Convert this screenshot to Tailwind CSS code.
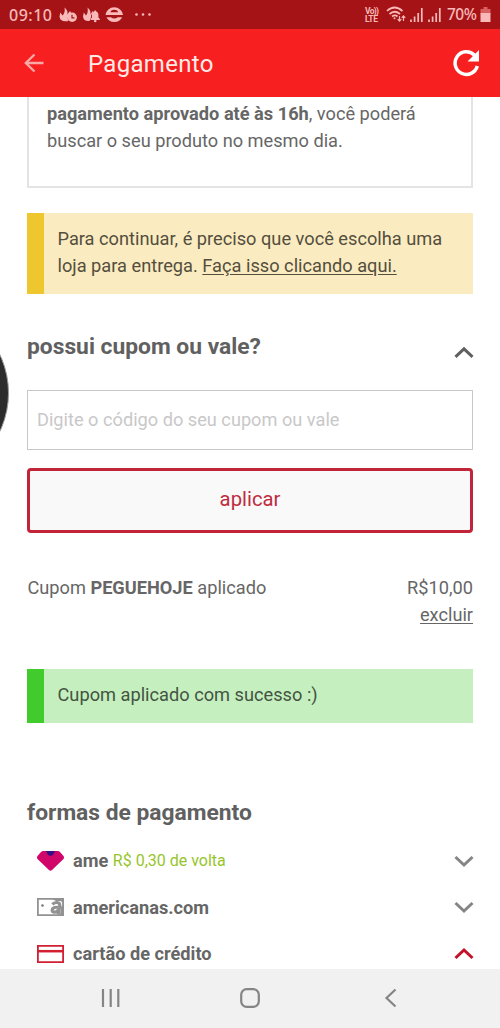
<!DOCTYPE html>
<html lang="pt-BR">
<head>
<meta charset="utf-8">
<meta name="viewport" content="width=device-width, initial-scale=1">
<title>Pagamento</title>
<script src="https://cdn.jsdelivr.net/npm/@tailwindcss/browser@4"></script>
</head>
<body class="w-[500px] h-[1028px] overflow-hidden bg-white font-['Roboto',sans-serif] text-[#666]">
<div class="relative flex h-[1028px] w-[500px] flex-col overflow-hidden">
  <!-- Status bar -->
  <div class="flex h-[29px] shrink-0 items-center bg-[#a51316] text-[#f8b9b8]">
    <span class="ml-[9px] w-[50px] whitespace-nowrap font-['Noto_Sans',sans-serif] text-[16px] font-medium leading-none tracking-[0.5px]">09:10</span>
    <svg class="h-[29px] w-[93px]" viewBox="59 0 93 29" fill="currentColor">
      <path d="M64.500 7.500q4 3.500 2.800 7l2.700-3.500q1.200 1 1 2.500a5.200 5.200 0 0 0-2.500 7.500q-8.500 1.500-9-4.500l.8-4 2.200 3q3-3 2-8z"/>
      <circle cx="72.200" cy="17.300" r="4.700"/><path d="M72 14.800v3h2.500" fill="none" stroke="#a51316" stroke-width="1.200"/>
      <path d="M87.500 7.500q4 3.500 2.800 7l2.500-3.500q1 .8.700 1.500-2.500 1.500-2.500 5l-1.500 3.500q-6 .5-6.500-4.500l.8-4 2.200 3q2.500-3 1.500-8z"/>
      <path d="M90.500 20v-1l1.500-1.500v-3a3.500 3.500 0 0 1 2.400-3.200v-.8h1.600v.8a3.500 3.500 0 0 1 2.400 3.200v3l1.500 1.500v1z"/><circle cx="95.200" cy="21" r="1.300"/>
      <path fill-rule="evenodd" d="M105.500 15a8.800 8.800 0 0 1 17.500 0zM110.500 12.300h7.500a3.700 2.500 0 0 0-7.500 0z"/>
      <path d="M106.500 17.200h4.300q3.500 2.600 7 0h4.300a8.400 7.500 0 0 1-15.600 0z"/>
      <circle cx="136.500" cy="14.500" r="1.300"/><circle cx="143" cy="14.500" r="1.300"/><circle cx="149.500" cy="14.500" r="1.300"/>
    </svg>
    <div class="ml-[213px] flex w-[16px] flex-col text-[8.500px] font-bold leading-[8px]"><span class="whitespace-nowrap tracking-[-0.7px]">Vo))</span><span class="tracking-[-0.3px]">LTE</span></div>
    <svg class="ml-[5px] h-[29px] w-[56px]" viewBox="386 0 56 29" fill="none" stroke="currentColor">
      <path stroke-width="1.700" d="M387 11q7.500-7 15.500 0M389.500 14q5-4.500 10.500 0M392 16.500q3-2.300 5.500 0"/>
      <path stroke-width="1.200" d="M399.500 16v5m-1.800-1.800 1.800 2 1.800-2M403.500 21v-5m-1.800 1.800 1.800-2 1.800 2"/>
      <circle cx="394.500" cy="18.300" r="1" fill="currentColor" stroke="none"/>
      <path stroke-width="1.700" d="M411 22v-2.500M414.600 22v-5.500M418.200 22v-9M421.800 22V8M429 22v-2.500M432.600 22v-5.500M436.200 22v-9M439.800 22V8"/>
    </svg>
    <span class="ml-[5px] w-[33px] whitespace-nowrap font-['Noto_Sans',sans-serif] text-[15.500px] font-medium leading-none tracking-[-0.5px]">70%</span>
    <svg class="h-[29px] w-[12px]" viewBox="480 0 12 29"><path fill="#d9605f" d="M483.500 7h4v2h3v5h-10V9h3z"/><path fill="currentColor" d="M480.500 13h10v9h-10z"/></svg>
  </div>

  <!-- App bar -->
  <header class="flex h-[68px] shrink-0 items-center bg-[#f71f20]">
    <svg class="ml-[23px] h-[24px] w-[22px]" viewBox="0 0 22 24" fill="none" stroke="#fba9a6" stroke-width="2.300"><path d="M20.500 12H2.500M11.500 3.500 2.800 12l8.700 8.500"/></svg>
    <h1 class="ml-[43px] pt-[2px] text-[24px] leading-none text-[#ffeae6] tracking-[0.300px]">Pagamento</h1>
    <svg class="ml-auto mr-[20px] h-[28px] w-[28px]" viewBox="0 0 28 28"><path d="M22.500 6.200A11.300 11.300 0 1 0 25.300 17" fill="none" stroke="#fff" stroke-width="3.500"/><path d="M27 1v11.500H15.500z" fill="#fff"/></svg>
  </header>

  <main class="flex h-[872px] shrink-0 flex-col overflow-hidden px-[27px] text-[18.200px] leading-[27px]">
    <p class="h-[91px] shrink-0 whitespace-nowrap border-2 border-t-0 border-[#e4e4e4] pl-[18px] pt-[3px]"><b>pagamento aprovado até às 16h</b>, você poderá<br>buscar o seu produto no mesmo dia.</p>

    <p class="mt-[25px] h-[81px] shrink-0 whitespace-nowrap border-l-[17px] border-[#eec72f] bg-[#faecc0] pl-[13.500px] pt-[12px] text-[18.230px] text-[#544e3e]">Para continuar, é preciso que você escolha uma<br>loja para entrega. <a class="underline underline-offset-2">Faça isso clicando aqui.</a></p>

    <div class="mt-[36px] flex h-[34px] shrink-0 justify-between">
      <h2 class="text-[22.800px] font-bold leading-[34px] text-[#606060]">possui cupom ou vale?</h2>
      <svg class="mt-[15px] -mr-px h-[14px] w-[20px]" viewBox="0 0 20 14" fill="none" stroke="#606060" stroke-width="3"><path d="m1.500 11.800 8.500-8 8.500 8"/></svg>
    </div>
    <div class="mt-[26px] flex h-[60px] shrink-0 items-center border-[1.500px] border-[#c8c8c8] pb-[2px] pl-[9px] text-[#c8c8c8]">Digite o código do seu cupom ou vale</div>
    <button class="mt-[18px] h-[65px] shrink-0 rounded-[4px] border-[3px] border-[#c2253a] bg-[#f9f9f9] pb-[2px] text-[20.300px] text-[#be2c40]">aplicar</button>

    <div class="mt-[41px] flex h-[55px] shrink-0 justify-between">
      <p class="pl-[0.500px]">Cupom <b>PEGUEHOJE</b> aplicado</p>
      <p class="text-right">R$10,00<br><a class="underline underline-offset-2">excluir</a></p>
    </div>
    <p class="mt-[40px] h-[54px] shrink-0 border-l-[17px] border-[#41cb2c] bg-[#c6efc0] pl-[13.500px] pt-[12px] text-[18.230px] text-[#435440]">Cupom aplicado com sucesso :)</p>

    <h2 class="mt-[73px] shrink-0 text-[22.800px] font-bold leading-[34px] text-[#606060]">formas de pagamento</h2>
    <ul class="mt-[7px] flex shrink-0 flex-col pl-[10px]">
      <li class="flex h-[47px] items-center">
        <svg class="h-[20px] w-[27px]" viewBox="0 0 27 20"><path fill="#d0066b" d="M6 0h15q1 0 2 1l3.500 4q1 1.500 0 3L15 19q-1.500 1.500-3 0L.5 8q-1-1.500 0-3L4 1q1-1 2-1z"/><path fill="#341084" d="M9 0h9l-2 4q-2.500 1.500-5 0z"/></svg>
        <b class="ml-[9px]">ame</b><span class="ml-[4.500px] text-[16px] text-[#96c52c]">R$ 0,30 de volta</span>
        <svg class="ml-auto -mr-px h-[14px] w-[20px]" viewBox="0 0 20 14" fill="none" stroke="#858585" stroke-width="3"><path d="m1.500 3 8.500 8 8.500-8"/></svg>
      </li>
      <li class="flex h-[46px] items-center">
        <svg class="h-[18px] w-[27px]" viewBox="0 0 27 18" fill="none"><path stroke="#929292" stroke-width="1.800" d="M.9.900h25.200v16.200H.9z"/><path fill="#929292" d="M15 1h11v5l-2-3h-5zM24 9l2-3v11h-3z"/><circle cx="5.500" cy="7.500" r="1.300" fill="#777"/><path stroke="#929292" stroke-width="3.200" d="M15.500 6.500q1.500-2.200 4.500-2 3.300.2 2.700 3.500l-1.500 8.500M22 9.300q-6.500-.5-6.800 2.500-.2 2.400 2.300 2.400 3 0 4-3"/></svg>
        <b class="ml-[9px]">americanas.com</b>
        <svg class="ml-auto -mr-px h-[14px] w-[20px]" viewBox="0 0 20 14" fill="none" stroke="#858585" stroke-width="3"><path d="m1.500 3 8.500 8 8.500-8"/></svg>
      </li>
      <li class="flex h-[47px] items-center">
        <svg class="h-[18px] w-[27px]" viewBox="0 0 27 18" fill="none" stroke="#d21f32"><path stroke-width="1.800" d="M.9.900h25.200v16.200H.9z"/><path stroke-width="2.500" d="M1 6.200h25"/></svg>
        <b class="ml-[9px]">cartão de crédito</b>
        <svg class="ml-auto -mr-px h-[14px] w-[20px]" viewBox="0 0 20 14" fill="none" stroke="#c41028" stroke-width="3"><path d="m1.500 11 8.500-8 8.500 8"/></svg>
      </li>
    </ul>
  </main>

  <!-- System navigation -->
  <nav class="flex h-[59px] shrink-0 items-center bg-[#f1f1f1] pb-[2px]">
    <svg class="ml-[101px] h-[20px] w-[20px]" viewBox="0 0 20 20" stroke="#858585" stroke-width="2.200"><path d="M2 1v18M9.700 1v18M17.300 1v18"/></svg>
    <svg class="ml-[119px] h-[20px] w-[20px]" viewBox="0 0 20 20" fill="none" stroke="#858585" stroke-width="2.200"><rect x="1.200" y="1.200" width="17.600" height="17.600" rx="5.500"/></svg>
    <svg class="ml-[124px] h-[20px] w-[14px]" viewBox="0 0 14 20" fill="none" stroke="#858585" stroke-width="2.200"><path d="M11.500 1.500 2.500 10l9 8.500"/></svg>
  </nav>

  <!-- Floating bubble docked at the left edge -->
  <div class="absolute -left-[171px] top-[303px] h-[180px] w-[180px] rounded-full border border-[#999] bg-[#2c2c2c]"></div>
</div>
</body>
</html>
